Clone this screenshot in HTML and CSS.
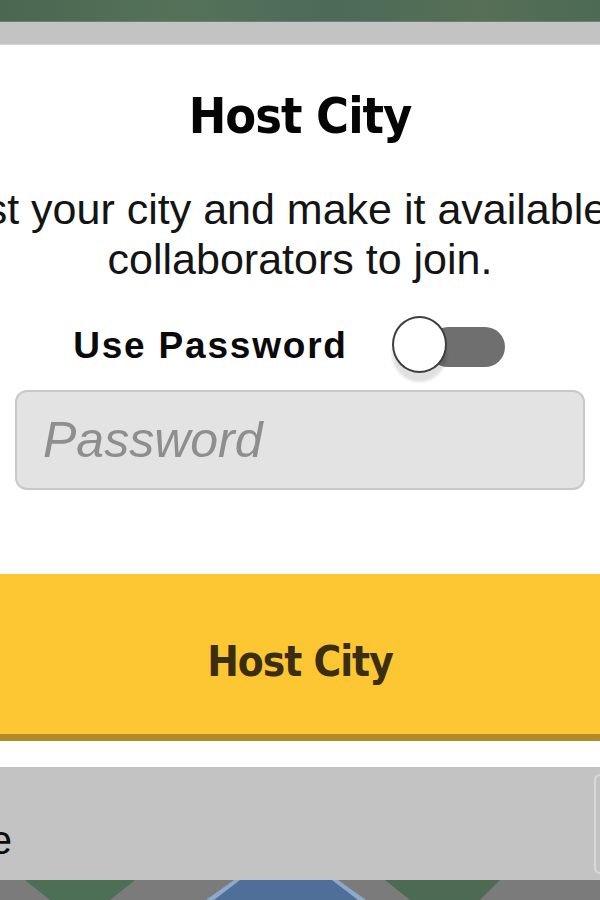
FILE: index.html
```html
<!DOCTYPE html>
<html lang="en">
<head>
    <meta charset="UTF-8">
    <meta name="viewport" content="width=device-width, initial-scale=1.0">
    <title>Host City</title>
    <link rel="stylesheet" href="styles.css">
</head>
<body>
    <div class="scene-top"></div>
    <div class="sheet-back"></div>

    <div class="modal">
        <h1 class="modal-title">Host City</h1>

        <p class="modal-text">
            <span>Host your city and make it available for</span>
            <span>collaborators to join.</span>
        </p>

        <div class="password-row">
            <span class="password-label">Use Password</span>
            <div class="toggle">
                <div class="toggle-track"></div>
                <div class="toggle-knob"></div>
            </div>
        </div>

        <div class="field">
            <input class="password-input" type="password" placeholder="Password">
        </div>

        <button class="host-button">Host City</button>
    </div>

    <div class="footer-panel">
        <div class="footer-label"><span>Close</span></div>
        <div class="footer-edge"></div>
    </div>

    <div class="scene-bottom">
        <svg width="600" height="20" viewBox="0 0 600 20">
            <rect width="600" height="20" fill="#7c7b7b"/>
            <polygon points="25,0 135,0 110,20 50,20" fill="#4c6f55"/>
            <polygon points="385,0 500,0 480,20 410,20" fill="#4d6a55"/>
            <polygon points="206,20 234,0 338,0 366,20" fill="#8fa9c8"/>
            <polygon points="214,20 240,0 332,0 358,20" fill="#4f6f98"/>
        </svg>
    </div>
</body>
</html>
```

FILE: styles.css
```css
* {
    margin: 0;
    padding: 0;
    box-sizing: border-box;
}

body {
    width: 600px;
    height: 900px;
    overflow: hidden;
    font-family: "Liberation Sans", Arial, sans-serif;
    background: #c3c3c3;
    color: #111;
}

.scene-top {
    height: 22px;
    background: linear-gradient(90deg, #4b6651 0%, #557259 30%, #4c6a58 55%, #566f56 80%, #4d6a55 100%);
    border-bottom: 1px solid #6f7e70;
}

.sheet-back {
    height: 23px;
    background: #c3c3c3;
    border-bottom: 1px solid #d6d6d6;
}

.modal {
    height: 722px;
    background: #fff;
    display: flex;
    flex-direction: column;
    align-items: center;
    padding-top: 41px;
}

.modal-title {
    font-family: "DejaVu Sans Condensed", "DejaVu Sans", sans-serif;
    font-stretch: condensed;
    font-size: 50px;
    font-weight: 700;
    letter-spacing: -1px;
    line-height: 60px;
    color: #050505;
}

.modal-text {
    margin-top: 38px;
    width: 100%;
    display: flex;
    flex-direction: column;
    align-items: center;
    font-size: 43px;
    line-height: 50px;
    white-space: nowrap;
    color: #141414;
}

.password-row {
    margin-top: 32px;
    display: flex;
    align-items: center;
    justify-content: center;
    gap: 44px;
    width: 100%;
    padding-right: 22px;
}

.password-label {
    font-size: 37px;
    font-weight: 700;
    letter-spacing: 1.8px;
    color: #0a0a0a;
}

.toggle {
    position: relative;
    width: 113px;
    height: 60px;
}

.toggle-track {
    position: absolute;
    left: 36px;
    top: 11px;
    width: 77px;
    height: 40px;
    border-radius: 20px;
    background: #6f6f6f;
}

.toggle-knob {
    position: absolute;
    left: 0;
    top: 0;
    width: 55px;
    height: 57px;
    border-radius: 50%;
    background: #fff;
    border: 2px solid #3e3e3e;
    box-shadow: 0 9px 3px rgba(0, 0, 0, 0.12);
}

.field {
    width: 100%;
    padding: 0 15px;
    margin-top: 14px;
}

.password-input {
    width: 100%;
    height: 100px;
    border-radius: 12px;
    background: #e3e3e3;
    border: 2px solid #c9c9c9;
    padding: 0 26px;
    font-family: "Liberation Sans", Arial, sans-serif;
    font-size: 50px;
    font-style: italic;
    outline: none;
}

.password-input::placeholder {
    color: #8e8e8e;
}

.host-button {
    margin-top: 84px;
    width: 100%;
    height: 167px;
    background: #fdc734;
    border: none;
    border-bottom: 7px solid #b38a28;
    font-family: "DejaVu Sans Condensed", "DejaVu Sans", sans-serif;
    font-stretch: condensed;
    font-size: 42px;
    font-weight: 700;
    letter-spacing: -1px;
    color: #3b2e10;
    padding-top: 14px;
}

.footer-panel {
    height: 113px;
    background: #c3c3c3;
    display: flex;
    align-items: center;
    justify-content: space-between;
    padding-top: 34px;
}

.footer-label {
    width: 12px;
    overflow: hidden;
    display: flex;
    justify-content: flex-end;
    font-size: 40px;
    white-space: nowrap;
    color: #0c0c0c;
}

.footer-edge {
    width: 6px;
    height: 100px;
    border: 2px solid #d8d8d8;
    border-right: none;
    border-radius: 12px 0 0 12px;
    margin-top: -34px;
}

.scene-bottom {
    height: 20px;
}

.scene-bottom svg {
    display: block;
}
```
